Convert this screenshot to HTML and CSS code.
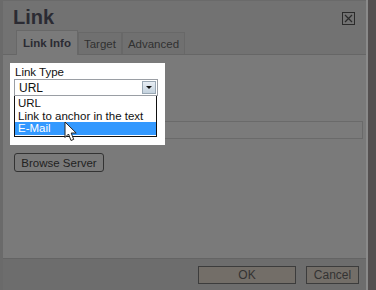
FILE: index.html
```html
<!DOCTYPE html>
<html lang="en">
<head>
    <meta charset="UTF-8">
    <title>Link</title>
    <link rel="stylesheet" href="styles.css">
</head>
<body>
    <div class="dialog">
        <div class="title-bar">
            <div class="title">Link</div>
            <div class="close">
                <svg width="13" height="13" viewBox="0 0 13 13">
                    <rect x="0.5" y="0.5" width="12" height="12" fill="none" stroke="#2a2a2a"/>
                    <path d="M3 3 L10 10 M10 3 L3 10" stroke="#2a2a2a" stroke-width="1.2"/>
                </svg>
            </div>
        </div>
        <div class="tabs">
            <div class="tab active">Link Info</div>
            <div class="tab">Target</div>
            <div class="tab">Advanced</div>
        </div>
        <div class="content">
            <div class="spotlight">
                <div class="label">Link Type</div>
                <div class="select">
                    <span>URL</span>
                    <span class="arrow"></span>
                </div>
                <div class="options">
                    <div class="option">URL</div>
                    <div class="option">Link to anchor in the text</div>
                    <div class="option selected">E-Mail</div>
                    <svg class="cursor" width="14" height="21" viewBox="0 0 14 21">
                        <path d="M1 1 L1 16.5 L4.5 13 L7 19.5 L9.7 18.4 L7.2 12 L12.2 12 Z" fill="#fff" stroke="#222" stroke-width="1"/>
                    </svg>
                </div>
            </div>
            <div class="url-row">
                <div class="url-input"></div>
            </div>
            <button class="browse">Browse Server</button>
        </div>
        <div class="footer">
            <button class="btn ok">OK</button>
            <button class="btn cancel">Cancel</button>
        </div>
    </div>
</body>
</html>
```
FILE: styles.css
```css
body {
    margin: 0;
    width: 376px;
    height: 290px;
    overflow: hidden;
    font-family: "Liberation Sans", Arial, sans-serif;
    background: #545050;
}
.dialog {
    width: 368px;
    height: 290px;
    border-left: 3px solid #6a6a6a;
    border-right: 2px solid #8a8a8a;
    background: #7a7a7a;
    display: flex;
    flex-direction: column;
    box-sizing: border-box;
}
.title-bar {
    height: 31px;
    background: #727272;
    display: flex;
    justify-content: space-between;
    align-items: flex-start;
    padding: 0 10px 0 10px;
    border-top: 1px solid #6a6a6a;
}
.title {
    font-size: 20px;
    font-weight: bold;
    color: #2b2b33;
    margin-top: 5px;
}
.close {
    margin-top: 10px;
    margin-right: 1px;
}
.tabs {
    background: #727272;
    display: flex;
    padding-left: 13px;
    height: 22px;
    border-bottom: 1px solid #666;
}
.tab {
    font-size: 11.5px;
    color: #303030;
    padding: 5px 5px 0 5px;
    background: #707070;
    border: 1px solid #686868;
    border-bottom: none;
}
.tab.active {
    font-weight: bold;
    background: #7a7a7a;
    color: #2b2b33;
    padding: 6px 6px 0 6px;
    margin-top: -2px;
    height: 18px;
    margin-bottom: -1px;
}
.content {
    flex: 1;
    padding: 8px 0 0 7px;
}
.spotlight {
    position: relative;
    z-index: 1;
    width: 151px;
    height: 74px;
    background: #fff;
    padding: 4px 0 4px 4px;
}
.label {
    font-size: 11.5px;
    color: #111;
    line-height: 11px;
    padding-left: 1px;
}
.select {
    margin-top: 1px;
    width: 144px;
    height: 17px;
    border: 1px solid #9a9ea4;
    box-sizing: border-box;
    display: flex;
    justify-content: space-between;
    align-items: center;
    font-size: 12px;
    color: #111;
    padding-left: 4px;
}
.arrow {
    width: 14px;
    height: 13px;
    margin-right: 1px;
    background: linear-gradient(#e8eef4, #c4d2de);
    border: 1px solid #9aa8b4;
    box-sizing: border-box;
    position: relative;
}
.arrow::after {
    content: "";
    position: absolute;
    left: 3px;
    top: 4px;
    border-left: 3px solid transparent;
    border-right: 3px solid transparent;
    border-top: 3px solid #111;
}
.options {
    position: relative;
    width: 143px;
    border: 1px solid #111;
    border-top: none;
    box-sizing: border-box;
    padding: 1px 0 1px 0;
}
.option {
    font-size: 11.5px;
    line-height: 12.5px;
    padding-left: 3px;
    color: #111;
}
.option.selected {
    background: #3399ff;
    color: #fff;
}
.cursor {
    position: absolute;
    left: 49px;
    top: 25px;
}
.url-row {
    margin-top: -24px;
    padding-left: 143px;
}
.url-input {
    width: 210px;
    height: 18px;
    border: 1px solid #6a6a6a;
    box-sizing: border-box;
    background: #7b7b7b;
}
.browse {
    margin: 14px 0 0 4px;
    width: 90px;
    height: 19px;
    font-family: "Liberation Sans", Arial, sans-serif;
    font-size: 11.5px;
    color: #222;
    background: #7a7a7a;
    border: 1px solid #333;
    border-radius: 3px;
    padding: 0;
}
.footer {
    height: 32px;
    background: #6d6d6d;
    border-top: 1px solid #646464;
    display: flex;
    justify-content: flex-end;
    align-items: flex-start;
    padding: 7px 7px 0 0;
    box-sizing: border-box;
    gap: 10px;
}
.btn {
    height: 18px;
    font-family: "Liberation Sans", Arial, sans-serif;
    font-size: 12px;
    color: #333;
    background: #736e68;
    border: 1px solid #3c3c3c;
    padding: 0;
}
.ok {
    width: 98px;
}
.cancel {
    width: 53px;
}
```
